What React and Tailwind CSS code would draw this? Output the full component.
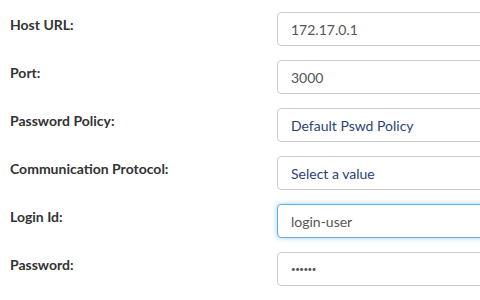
const rows = [
  { label: "Host URL:", value: "172.17.0.1", kind: "text" },
  { label: "Port:", value: "3000", kind: "text" },
  { label: "Password Policy:", value: "Default Pswd Policy", kind: "select" },
  { label: "Communication Protocol:", value: "Select a value", kind: "select" },
  { label: "Login Id:", value: "login-user", kind: "focus" },
  { label: "Password:", value: "••••••", kind: "password" },
];

function Field({ row }) {
  const base = "flex h-[34px] w-[260px] shrink-0 items-center rounded-[4px] border bg-white px-[13px]";
  if (row.kind === "focus") {
    return (
      <div className={`${base} border-[#66afe9] text-[14px] text-[#555] shadow-[0_0_5px_rgba(102,175,233,0.6)]`}>
        {row.value}
      </div>
    );
  }
  if (row.kind === "select") {
    return <div className={`${base} border-[#ccc] text-[14px] text-[#2b3f79]`}>{row.value}</div>;
  }
  if (row.kind === "password") {
    return (
      <div className={`${base} border-[#ccc] text-[#555]`}>
        <span className="text-[8px] tracking-[-0.5px]">{row.value}</span>
      </div>
    );
  }
  return <div className={`${base} border-[#ccc] text-[14px] text-[#555]`}>{row.value}</div>;
}

export default function App() {
  return (
    <div className="h-[300px] w-[480px] overflow-hidden bg-white font-['Lato',sans-serif]">
      <div className="flex flex-col gap-[14px] pt-[12px]">
        {rows.map((row) => (
          <div key={row.label} className="flex items-start">
            <div className="w-[277px] shrink-0 pl-[10px] pt-[2px] text-[14px] font-bold text-[#333]">{row.label}</div>
            <Field row={row} />
          </div>
        ))}
      </div>
    </div>
  );
}
